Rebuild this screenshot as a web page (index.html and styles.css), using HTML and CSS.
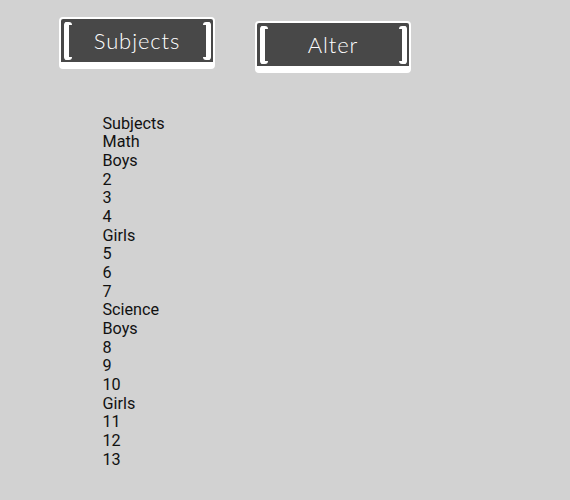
FILE: index.html
```html
<!DOCTYPE html>
<html lang="en">
  <head>
    <meta charset="UTF-8" />
    <meta name="viewport" content="width=device-width, initial-scale=1.0" />
    <title>Subjects</title>
    <link rel="stylesheet" href="styles.css">
  </head>
  <body>
    <div class="buttons">
      <button class="btn" type="button">Subjects</button>
      <button class="btn btn-alter" type="button">Alter</button>
    </div>
    <div class="list">
      <div>Subjects</div>
      <div>Math</div>
      <div>Boys</div>
      <div>2</div>
      <div>3</div>
      <div>4</div>
      <div>Girls</div>
      <div>5</div>
      <div>6</div>
      <div>7</div>
      <div>Science</div>
      <div>Boys</div>
      <div>8</div>
      <div>9</div>
      <div>10</div>
      <div>Girls</div>
      <div>11</div>
      <div>12</div>
      <div>13</div>
    </div>
  </body>
</html>
```

FILE: styles.css
```css
body {
  margin: 0;
  background-color: #d2d2d2;
  font-family: Roboto, sans-serif;
  font-size: 16.2px;
  color: #111;
}
.buttons {
  display: flex;
  align-items: flex-start;
  gap: 40px;
  padding: 17px 0 0 59px;
}
.btn {
  position: relative;
  box-sizing: border-box;
  width: 156px;
  height: 52px;
  padding: 0;
  border: 2px solid #fff;
  border-bottom-width: 7px;
  border-radius: 4px;
  background: #484848;
  color: #fff;
  font-family: Lato, sans-serif;
  font-size: 22px;
  font-weight: 300;
  letter-spacing: 0.9px;
}
.btn-alter {
  margin-top: 4px;
}
.btn::before,
.btn::after {
  content: "";
  position: absolute;
  top: 3px;
  bottom: 2px;
  width: 3px;
  border: 3px solid #fff;
  border-radius: 3px;
}
.btn::before {
  left: 3px;
  border-left-width: 5px;
  border-right: none;
}
.btn::after {
  right: 2px;
  border-right-width: 5px;
  border-left: none;
}
.list {
  margin: 41.5px 0 0 102.5px;
  line-height: 18.67px;
}
```
